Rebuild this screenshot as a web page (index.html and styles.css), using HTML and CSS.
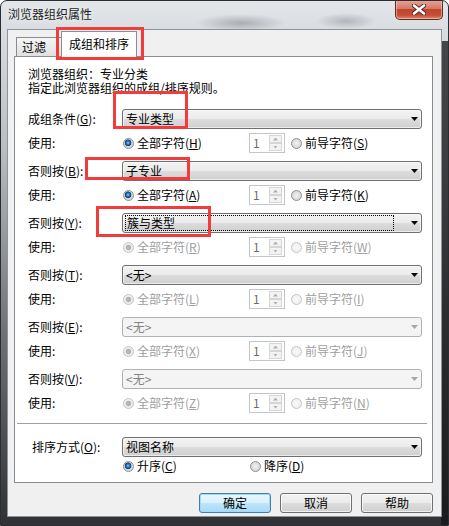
FILE: index.html
```html
<!DOCTYPE html>
<html lang="zh-CN">
<head>
    <meta charset="UTF-8">
    <title>浏览器组织属性</title>
    <link rel="stylesheet" href="styles.css">
</head>
<body>
    <div class="window">
        <div class="titlebar">
            <span class="title">浏览器组织属性</span>
            <span class="close">
                <svg width="14" height="11" viewBox="0 0 14 11">
                    <path d="M2 1.5 L12 9.5 M12 1.5 L2 9.5" stroke="#4a2622" stroke-width="4.4" stroke-linecap="round"/>
                    <path d="M2 1.5 L12 9.5 M12 1.5 L2 9.5" stroke="#fff" stroke-width="2.6" stroke-linecap="round"/>
                </svg>
            </span>
        </div>

        <div class="client">
            <div class="tabs">
                <div class="tab">过滤</div>
                <div class="tab active">成组和排序</div>
            </div>

            <div class="panel">
                <div class="info">
                    <div>浏览器组织：专业分类</div>
                    <div>指定此浏览器组织的成组/排序规则。</div>
                </div>

                <div class="groups">
                    <div class="group">
                        <div class="row">
                            <span class="lbl">成组条件(<u>G</u>):</span>
                            <div class="combo"><span class="val">专业类型</span><i class="caret"></i></div>
                        </div>
                        <div class="row use">
                            <span class="lbl">使用:</span>
                            <span class="opt first"><span class="radio on"></span>全部字符(<u>H</u>)</span>
                            <span class="spin"><span class="num">1</span><span class="btns"><i class="up"></i><i class="dn"></i></span></span>
                            <span class="opt"><span class="radio"></span>前导字符(<u>S</u>)</span>
                        </div>
                    </div>

                    <div class="group">
                        <div class="row">
                            <span class="lbl">否则按(<u>B</u>):</span>
                            <div class="combo"><span class="val">子专业</span><i class="caret"></i></div>
                        </div>
                        <div class="row use">
                            <span class="lbl">使用:</span>
                            <span class="opt first"><span class="radio on"></span>全部字符(<u>A</u>)</span>
                            <span class="spin"><span class="num">1</span><span class="btns"><i class="up"></i><i class="dn"></i></span></span>
                            <span class="opt"><span class="radio"></span>前导字符(<u>K</u>)</span>
                        </div>
                    </div>

                    <div class="group">
                        <div class="row">
                            <span class="lbl">否则按(<u>Y</u>):</span>
                            <div class="combo"><span class="val focus">簇与类型</span><i class="caret"></i></div>
                        </div>
                        <div class="row use off">
                            <span class="lbl">使用:</span>
                            <span class="opt first"><span class="radio on"></span>全部字符(<u>R</u>)</span>
                            <span class="spin"><span class="num">1</span><span class="btns"><i class="up"></i><i class="dn"></i></span></span>
                            <span class="opt"><span class="radio"></span>前导字符(<u>W</u>)</span>
                        </div>
                    </div>

                    <div class="group">
                        <div class="row">
                            <span class="lbl">否则按(<u>T</u>):</span>
                            <div class="combo"><span class="val">&lt;无&gt;</span><i class="caret"></i></div>
                        </div>
                        <div class="row use off">
                            <span class="lbl">使用:</span>
                            <span class="opt first"><span class="radio on"></span>全部字符(<u>L</u>)</span>
                            <span class="spin"><span class="num">1</span><span class="btns"><i class="up"></i><i class="dn"></i></span></span>
                            <span class="opt"><span class="radio"></span>前导字符(<u>I</u>)</span>
                        </div>
                    </div>

                    <div class="group">
                        <div class="row">
                            <span class="lbl">否则按(<u>E</u>):</span>
                            <div class="combo disabled"><span class="val">&lt;无&gt;</span><i class="caret"></i></div>
                        </div>
                        <div class="row use off">
                            <span class="lbl">使用:</span>
                            <span class="opt first"><span class="radio on"></span>全部字符(<u>X</u>)</span>
                            <span class="spin"><span class="num">1</span><span class="btns"><i class="up"></i><i class="dn"></i></span></span>
                            <span class="opt"><span class="radio"></span>前导字符(<u>J</u>)</span>
                        </div>
                    </div>

                    <div class="group">
                        <div class="row">
                            <span class="lbl">否则按(<u>V</u>):</span>
                            <div class="combo disabled"><span class="val">&lt;无&gt;</span><i class="caret"></i></div>
                        </div>
                        <div class="row use off">
                            <span class="lbl">使用:</span>
                            <span class="opt first"><span class="radio on"></span>全部字符(<u>Z</u>)</span>
                            <span class="spin"><span class="num">1</span><span class="btns"><i class="up"></i><i class="dn"></i></span></span>
                            <span class="opt"><span class="radio"></span>前导字符(<u>N</u>)</span>
                        </div>
                    </div>
                </div>

                <div class="sep"></div>

                <div class="row sort">
                    <span class="lbl">排序方式(<u>O</u>):</span>
                    <div class="combo"><span class="val">视图名称</span><i class="caret"></i></div>
                </div>
                <div class="row order">
                    <span class="lbl"></span>
                    <span class="opt first"><span class="radio on"></span>升序(<u>C</u>)</span>
                    <span class="opt"><span class="radio"></span>降序(<u>D</u>)</span>
                </div>
            </div>

            <div class="buttons">
                <button class="btn default">确定</button>
                <button class="btn">取消</button>
                <button class="btn">帮助</button>
            </div>
        </div>

        <!-- red annotation boxes -->
        <div class="mark mark-tab"></div>
        <div class="mark mark-1"></div>
        <div class="mark mark-2"></div>
        <div class="mark mark-3"></div>
    </div>
</body>
</html>
```

FILE: styles.css
```css
body {
    margin: 0;
    font-family: "Noto Sans CJK SC", "Noto Sans", sans-serif;
    font-size: 12px;
    line-height: 14px;
    color: #000;
}
.window {
    position: relative;
    width: 449px;
    height: 526px;
    box-sizing: border-box;
    border: 1px solid #2b2d30;
    border-radius: 7px 7px 0 0;
    padding: 0 6px;
    overflow: hidden;
    background:
        radial-gradient(ellipse 45px 9px at 240px 22px, rgba(80, 84, 90, .35), transparent),
        radial-gradient(ellipse 30px 8px at 345px 20px, rgba(80, 84, 90, .3), transparent),
        linear-gradient(to left, rgba(20, 20, 22, .75) 0, rgba(20, 20, 22, .75) 7px, transparent 7px) right 0 top 40px / 8px 490px no-repeat,
        linear-gradient(#e3e6e9 0, #d9dde1 30px, #b8bdc2 150px, #6f7378 330px, #2f3134 100%);
}
.titlebar {
    height: 28px;
    display: flex;
    justify-content: space-between;
    align-items: flex-start;
}
.title {
    padding: 6px 0 0 1px;
    color: #1e1e1e;
    text-shadow: 0 0 6px rgba(255, 255, 255, .9);
}
.close {
    width: 48px;
    height: 20px;
    margin: -1px -1px 0 0;
    box-sizing: border-box;
    border: 1px solid #5b2c26;
    border-top: none;
    border-radius: 0 0 5px 5px;
    background: linear-gradient(#e9a597 0, #d47a68 45%, #c2432f 50%, #c44e38 80%, #dc8a70 100%);
    box-shadow: inset 0 0 0 1px rgba(255, 220, 210, .5);
    display: flex;
    align-items: center;
    justify-content: center;
}
.client {
    height: 488px;
    box-sizing: border-box;
    border: 1px solid #8e9398;
    background: #f0f0f0;
    padding: 1px 8px 0 6px;
}
.tabs {
    position: relative;
    z-index: 1;
    height: 26px;
    display: flex;
    align-items: flex-end;
    padding-left: 2px;
}
.tab {
    width: 46px;
    height: 19px;
    box-sizing: border-box;
    margin-bottom: 1px;
    border: 1px solid #898c95;
    border-bottom: none;
    background: linear-gradient(#f6f6f6, #e0e0e0);
    padding: 2px 0 0 5px;
}
.tab.active {
    width: 76px;
    height: 26px;
    margin: 0 0 0 -1px;
    padding: 5px 0 0;
    text-align: center;
    background: #fff;
}
.panel {
    margin-top: -1px;
    height: 427px;
    box-sizing: border-box;
    border: 1px solid #898c95;
    background: #fff;
    padding: 10px 10px 0 13px;
}
.info {
    line-height: 14px;
}
.groups {
    margin-top: 14px;
    display: flex;
    flex-direction: column;
    gap: 8px;
}
.group {
    display: flex;
    flex-direction: column;
    gap: 4px;
}
.row {
    height: 20px;
    display: flex;
    align-items: center;
}
.lbl {
    width: 94px;
    flex: none;
    color: #000;
}
.combo {
    flex: 1;
    height: 20px;
    box-sizing: border-box;
    border: 1px solid #707070;
    border-radius: 3px;
    background: linear-gradient(#f2f2f2 0, #ebebeb 50%, #dddddd 50%, #cfcfcf 100%);
    box-shadow: inset 0 0 0 1px rgba(255, 255, 255, .6);
    display: flex;
    align-items: center;
    padding: 0 3px 0 3px;
}
.val {
    flex: 1;
}
.val.focus {
    margin: 0 17px 0 -1px;
    padding-left: 1px;
    height: 14px;
    border: 1px dotted #000;
}
.caret {
    width: 7px;
    height: 4px;
    background: #000;
    clip-path: polygon(0 0, 100% 0, 50% 100%);
}
.combo.disabled {
    border-color: #adb2b5;
    background: #f4f4f4;
    box-shadow: none;
    color: #838383;
}
.combo.disabled .caret {
    background: #a6a6a6;
}
.opt {
    display: flex;
    align-items: center;
}
.opt.first {
    width: 127px;
    flex: none;
}
.radio {
    width: 11px;
    height: 11px;
    box-sizing: border-box;
    margin: 0 3px 0 1px;
    border: 1px solid #8f9090;
    border-radius: 50%;
    background: radial-gradient(circle at 50% 50%, #f2f2f2 0, #dedede 55%, #c9c9c9 100%);
}
.radio.on {
    background: radial-gradient(circle at 45% 42%, #8fd0f5 0, #2b7cc0 1.5px, #0d3f78 3px, #d0d0d0 3.6px, #ececec 100%);
}
.off .opt {
    color: #a0a0a0;
}
.off .radio {
    border-color: #c4c4c4;
    background: radial-gradient(circle, #f9f9f9 0, #ececec 100%);
}
.off .radio.on {
    background: radial-gradient(circle, #b5b5b5 0, #b5b5b5 2.4px, #efefef 3.2px);
}
.spin {
    width: 36px;
    height: 20px;
    box-sizing: border-box;
    margin-right: 5px;
    border: 1px solid #c3c5c8;
    background: #fff;
    display: flex;
}
.spin .num {
    flex: 1;
    padding-left: 3px;
    line-height: 18px;
    color: #6d6d6d;
}
.spin .btns {
    width: 13px;
    margin: 1px 2px 1px 0;
    display: flex;
    flex-direction: column;
}
.spin i {
    flex: 1;
    box-sizing: border-box;
    border: 1px solid #d6d6d6;
    background: #f3f3f3;
    display: flex;
    align-items: center;
    justify-content: center;
}
.spin i::after {
    content: "";
    width: 5px;
    height: 3px;
    background: #b0b0b0;
}
.spin .up::after {
    clip-path: polygon(50% 0, 100% 100%, 0 100%);
}
.spin .dn::after {
    clip-path: polygon(0 0, 100% 0, 50% 100%);
}
.sep {
    margin: 10px -5px 0 -11px;
    border-top: 1px solid #a0a0a0;
    border-bottom: 1px solid #fff;
}
.sort {
    margin-top: 12px;
}
.sort .lbl {
    width: 90px;
    padding-left: 4px;
}
.order {
    height: 16px;
    margin-top: 1px;
}
.buttons {
    margin-top: 10px;
    display: flex;
    justify-content: flex-end;
    gap: 9px;
}
.btn {
    width: 72px;
    height: 20px;
    box-sizing: border-box;
    padding: 0;
    border: 1px solid #707070;
    border-radius: 3px;
    background: linear-gradient(#f2f2f2 0, #ebebeb 50%, #dddddd 50%, #cfcfcf 100%);
    box-shadow: inset 0 0 0 1px rgba(255, 255, 255, .7);
    font: inherit;
    line-height: 18px;
    color: #000;
}
.btn.default {
    border-color: #3c7fb1;
    background: linear-gradient(#eaf6fd 0, #d9f0fc 50%, #bee6fd 50%, #a7d9f5 100%);
    box-shadow: inset 0 0 0 1px #9fdcf8;
}
.mark {
    position: absolute;
    box-sizing: border-box;
    border: 3px solid #f23c3c;
    z-index: 5;
}
.mark-tab { left: 55px; top: 26px; width: 88px; height: 33px; }
.mark-1 { left: 112px; top: 90px; width: 75px; height: 38px; }
.mark-2 { left: 84px; top: 156px; width: 105px; height: 23px; }
.mark-3 { left: 95px; top: 205px; width: 115px; height: 31px; }
```
